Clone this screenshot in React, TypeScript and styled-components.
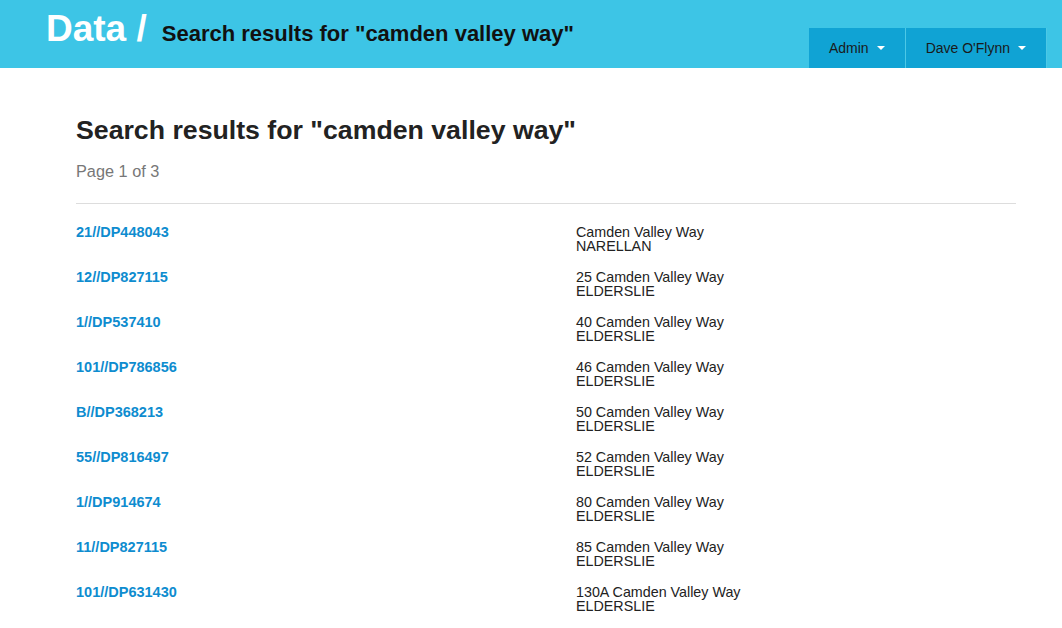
import React from "react";
import styled, { createGlobalStyle } from "styled-components";

interface Result {
  id: string;
  street: string;
  suburb: string;
}

const results: Result[] = [
  { id: "21//DP448043", street: "Camden Valley Way", suburb: "NARELLAN" },
  { id: "12//DP827115", street: "25 Camden Valley Way", suburb: "ELDERSLIE" },
  { id: "1//DP537410", street: "40 Camden Valley Way", suburb: "ELDERSLIE" },
  { id: "101//DP786856", street: "46 Camden Valley Way", suburb: "ELDERSLIE" },
  { id: "B//DP368213", street: "50 Camden Valley Way", suburb: "ELDERSLIE" },
  { id: "55//DP816497", street: "52 Camden Valley Way", suburb: "ELDERSLIE" },
  { id: "1//DP914674", street: "80 Camden Valley Way", suburb: "ELDERSLIE" },
  { id: "11//DP827115", street: "85 Camden Valley Way", suburb: "ELDERSLIE" },
  { id: "101//DP631430", street: "130A Camden Valley Way", suburb: "ELDERSLIE" },
];

const App: React.FC = () => {
  return (
    <>
      <GlobalStyle />
      <Header>
        <Brand>
          <BrandTitle>Data /</BrandTitle>
          <BrandSub>Search results for "camden valley way"</BrandSub>
        </Brand>
        <Nav>
          <NavButton>
            Admin <Caret />
          </NavButton>
          <NavButton>
            Dave O'Flynn <Caret />
          </NavButton>
        </Nav>
      </Header>
      <Main>
        <Title>Search results for "camden valley way"</Title>
        <PageInfo>Page 1 of 3</PageInfo>
        <Divider />
        <ResultList>
          {results.map((r, i) => (
            <ResultRow key={i}>
              <ResultLink href="#">{r.id}</ResultLink>
              <Address>
                {r.street}
                <br />
                {r.suburb}
              </Address>
            </ResultRow>
          ))}
        </ResultList>
      </Main>
    </>
  );
};

export default App;

const GlobalStyle = createGlobalStyle`
  html, body {
    margin: 0;
    padding: 0;
    background: #fff;
    font-family: "Liberation Sans", Arial, sans-serif;
    color: #222;
  }
`;

const Header = styled.header`
  height: 68px;
  background-color: #3dc5e6;
  display: flex;
  justify-content: space-between;
  align-items: flex-start;
  padding: 0 15px 0 46px;
  box-sizing: border-box;
`;

const Brand = styled.div`
  display: flex;
  align-items: baseline;
  gap: 15px;
  padding-top: 7px;
`;

const BrandTitle = styled.span`
  font-size: 37px;
  font-weight: bold;
  color: #fff;
  line-height: 44px;
`;

const BrandSub = styled.span`
  font-size: 22px;
  font-weight: bold;
  color: #111;
`;

const Nav = styled.nav`
  display: flex;
  margin-top: 28px;
`;

const NavButton = styled.div`
  height: 40px;
  display: flex;
  align-items: center;
  gap: 8px;
  padding: 0 20px;
  background-color: #10a3d4;
  border-right: 1px solid #4cc8e6;
  font-size: 14px;
  color: #1a1a1a;
  cursor: pointer;
`;

const Caret = styled.span`
  display: inline-block;
  width: 0;
  height: 0;
  border-top: 4px solid #fff;
  border-left: 4px solid transparent;
  border-right: 4px solid transparent;
`;

const Main = styled.main`
  padding: 46px 46px 0 76px;
`;

const Title = styled.h1`
  margin: 0;
  font-size: 26.7px;
  line-height: 32px;
  font-weight: bold;
  color: #222;
`;

const PageInfo = styled.p`
  margin: 15px 0 0;
  font-size: 16.3px;
  line-height: 20px;
  color: #777;
`;

const Divider = styled.hr`
  margin: 22px 0 0;
  border: 0;
  border-top: 1px solid #ddd;
`;

const ResultList = styled.div`
  display: flex;
  flex-direction: column;
  gap: 17px;
  padding-top: 21px;
`;

const ResultRow = styled.div`
  display: grid;
  grid-template-columns: 500px 1fr;
`;

const ResultLink = styled.a`
  font-size: 14.5px;
  line-height: 14px;
  font-weight: bold;
  color: #0e8ccf;
  text-decoration: none;
`;

const Address = styled.div`
  font-size: 14.3px;
  line-height: 14px;
  color: #222;
`;
